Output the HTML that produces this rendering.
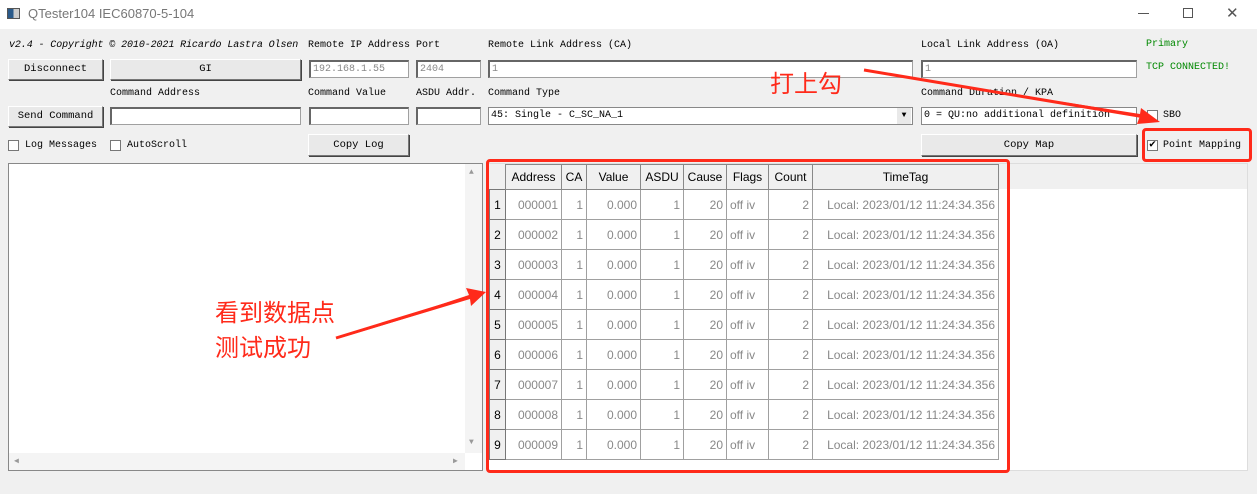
<!DOCTYPE html>
<html><head><meta charset="utf-8"><style>
*{box-sizing:border-box;margin:0;padding:0}
body{width:1257px;height:494px;background:#f0f0f0;position:relative;overflow:hidden;font-family:"Liberation Mono",monospace;font-size:10px;color:#000}
.a{position:absolute}
.t{position:absolute;white-space:nowrap;font-size:10px}
.btn{position:absolute;background:#e9e9e9;border:1px solid #fff;border-right-color:#777;border-bottom-color:#777;box-shadow:1px 1px 0 #444;text-align:center;line-height:19px;font-size:10.5px}
.in{position:absolute;background:#fff;border:1px solid #a0a0a0;border-top:2px solid #666;border-left:2px solid #666;font-size:10px;padding-left:2px;line-height:16px;color:#888}
.cb{position:absolute;width:11px;height:11px;background:#fff;border:1px solid #777}
table{border-collapse:collapse;font-family:"Liberation Sans",sans-serif;font-size:12px}
td,th{border:1px solid #a0a0a0;height:30px;color:#888;text-align:right;padding:0 3px;font-weight:normal}
th{height:25px;background:#f0f0f0;color:#000;text-align:center;border-color:#888}
td.rh{background:#f0f0f0;color:#000;text-align:center;padding:0;border-color:#777}
.red{position:absolute;border:3px solid #ff2a1a;border-radius:4px}
.cn{position:absolute;color:#ff2a1a;font-family:"Liberation Sans","Noto Sans CJK SC",sans-serif;font-size:24px;white-space:nowrap}
</style></head><body>
<div class="a" style="left:0;top:0;width:1257px;height:29px;background:#fff"></div>
<div class="a" style="left:7px;top:8px;width:13px;height:11px;border:1px solid #555;background:linear-gradient(90deg,#2a5a8a 50%,#ccc 50%)"></div>
<div class="t" style="left:28px;top:6px;font-family:'Liberation Sans',sans-serif;font-size:13px;color:#777">QTester104 IEC60870-5-104</div>
<div class="a" style="left:1138px;top:13px;width:11px;height:1px;background:#555"></div>
<div class="a" style="left:1183px;top:8px;width:10px;height:10px;border:1px solid #555"></div>
<div class="t" style="left:1226px;top:4px;font-size:15px;color:#555;font-family:'Liberation Sans',sans-serif">✕</div>

<div class="t" style="left:9px;top:40px;font-style:italic;font-family:'Liberation Mono',monospace;font-size:10px;letter-spacing:-0.1px">v2.4 - Copyright © 2010-2021 Ricardo Lastra Olsen</div>
<div class="t" style="left:308px;top:40px">Remote IP Address</div>
<div class="t" style="left:416px;top:40px">Port</div>
<div class="t" style="left:488px;top:40px">Remote Link Address (CA)</div>
<div class="t" style="left:921px;top:40px">Local Link Address (OA)</div>
<div class="t" style="left:1146px;top:39px;color:#080">Primary</div>

<div class="btn" style="left:8px;top:59px;width:95px;height:21px">Disconnect</div>
<div class="btn" style="left:110px;top:59px;width:191px;height:21px">GI</div>
<div class="in" style="left:309px;top:60px;width:100px;height:18px">192.168.1.55</div>
<div class="in" style="left:416px;top:60px;width:65px;height:18px">2404</div>
<div class="in" style="left:488px;top:60px;width:425px;height:18px">1</div>
<div class="in" style="left:921px;top:60px;width:216px;height:18px">1</div>
<div class="t" style="left:1146px;top:62px;color:#080">TCP CONNECTED!</div>

<div class="t" style="left:110px;top:88px">Command Address</div>
<div class="t" style="left:308px;top:88px">Command Value</div>
<div class="t" style="left:416px;top:88px">ASDU Addr.</div>
<div class="t" style="left:488px;top:88px">Command Type</div>
<div class="t" style="left:921px;top:88px">Command Duration / KPA</div>

<div class="btn" style="left:8px;top:106px;width:95px;height:21px">Send Command</div>
<div class="in" style="left:110px;top:107px;width:191px;height:18px"></div>
<div class="in" style="left:309px;top:107px;width:100px;height:18px"></div>
<div class="in" style="left:416px;top:107px;width:65px;height:18px"></div>
<div class="in" style="left:488px;top:107px;width:425px;height:18px;color:#000;border-width:1px;border-color:#888">45: Single - C_SC_NA_1</div>
<div class="a" style="left:897px;top:108px;width:14px;height:16px;background:#e9e9e9;font-size:8px;text-align:center;line-height:16px">▼</div>
<div class="in" style="left:921px;top:107px;width:216px;height:18px;color:#000;border-width:1px;border-color:#888">0 = QU:no additional definition</div>
<div class="cb" style="left:1147px;top:110px"></div>
<div class="t" style="left:1163px;top:110px">SBO</div>

<div class="cb" style="left:8px;top:140px"></div><div class="t" style="left:25px;top:140px">Log Messages</div>
<div class="cb" style="left:110px;top:140px"></div><div class="t" style="left:127px;top:140px">AutoScroll</div>
<div class="btn" style="left:308px;top:134px;width:101px;height:22px;line-height:20px">Copy Log</div>
<div class="btn" style="left:921px;top:134px;width:216px;height:22px;line-height:20px">Copy Map</div>
<div class="cb" style="left:1147px;top:140px;font-size:11px;line-height:9px;text-align:center;font-weight:bold">✔</div>
<div class="t" style="left:1163px;top:140px">Point Mapping</div>

<div class="a" style="left:8px;top:163px;width:475px;height:308px;background:#fff;border:1px solid #888"></div>
<div class="a" style="left:465px;top:164px;width:17px;height:289px;background:#f4f4f4"></div>
<div class="a" style="left:9px;top:453px;width:456px;height:17px;background:#f4f4f4"></div>
<div class="t" style="left:469px;top:168px;font-size:8px;color:#999">▲</div>
<div class="t" style="left:469px;top:438px;font-size:8px;color:#999">▼</div>
<div class="t" style="left:14px;top:456px;font-size:8px;color:#999">◀</div>
<div class="t" style="left:453px;top:456px;font-size:8px;color:#999">▶</div>

<div class="a" style="left:487px;top:163px;width:761px;height:308px;background:#fff;border:1px solid #ddd"></div>
<div class="a" style="left:488px;top:164px;width:759px;height:25px;background:#f0f0f0"></div>
<table class="a" style="left:489px;top:164px">
<tr><th style="width:16px;border:none;background:#f0f0f0"></th><th style="width:56px">Address</th><th style="width:25px">CA</th><th style="width:54px">Value</th><th style="width:43px">ASDU</th><th style="width:43px">Cause</th><th style="width:42px">Flags</th><th style="width:44px">Count</th><th style="width:186px">TimeTag</th></tr>
<tr><td class="rh">1</td><td>000001</td><td>1</td><td>0.000</td><td>1</td><td>20</td><td style="text-align:left">off iv</td><td>2</td><td>Local: 2023/01/12 11:24:34.356</td></tr>
<tr><td class="rh">2</td><td>000002</td><td>1</td><td>0.000</td><td>1</td><td>20</td><td style="text-align:left">off iv</td><td>2</td><td>Local: 2023/01/12 11:24:34.356</td></tr>
<tr><td class="rh">3</td><td>000003</td><td>1</td><td>0.000</td><td>1</td><td>20</td><td style="text-align:left">off iv</td><td>2</td><td>Local: 2023/01/12 11:24:34.356</td></tr>
<tr><td class="rh">4</td><td>000004</td><td>1</td><td>0.000</td><td>1</td><td>20</td><td style="text-align:left">off iv</td><td>2</td><td>Local: 2023/01/12 11:24:34.356</td></tr>
<tr><td class="rh">5</td><td>000005</td><td>1</td><td>0.000</td><td>1</td><td>20</td><td style="text-align:left">off iv</td><td>2</td><td>Local: 2023/01/12 11:24:34.356</td></tr>
<tr><td class="rh">6</td><td>000006</td><td>1</td><td>0.000</td><td>1</td><td>20</td><td style="text-align:left">off iv</td><td>2</td><td>Local: 2023/01/12 11:24:34.356</td></tr>
<tr><td class="rh">7</td><td>000007</td><td>1</td><td>0.000</td><td>1</td><td>20</td><td style="text-align:left">off iv</td><td>2</td><td>Local: 2023/01/12 11:24:34.356</td></tr>
<tr><td class="rh">8</td><td>000008</td><td>1</td><td>0.000</td><td>1</td><td>20</td><td style="text-align:left">off iv</td><td>2</td><td>Local: 2023/01/12 11:24:34.356</td></tr>
<tr><td class="rh">9</td><td>000009</td><td>1</td><td>0.000</td><td>1</td><td>20</td><td style="text-align:left">off iv</td><td>2</td><td>Local: 2023/01/12 11:24:34.356</td></tr>
</table>

<div class="red" style="left:486px;top:159px;width:524px;height:314px"></div>
<div class="red" style="left:1142px;top:128px;width:110px;height:34px"></div>
<div class="cn" style="left:770px;top:64px">打上勾</div>
<div class="cn" style="left:215px;top:296px;line-height:35px">看到数据点<br>测试成功</div>
<svg class="a" style="left:0;top:0" width="1257" height="494">
<path d="M865 71 L1140 116 L1137 124 L1160 122 L1141 108 L1140 114 Z" fill="#ff2a1a"/>
<path d="M864 70 L1145 117" stroke="#ff2a1a" stroke-width="3"/>
<path d="M336 338 L473 296" stroke="#ff2a1a" stroke-width="3"/>
<path d="M340 338 L470 299 L471 306 L486 292 L466 288 L469 295 Z" fill="#ff2a1a"/>
</svg>
</body></html>
